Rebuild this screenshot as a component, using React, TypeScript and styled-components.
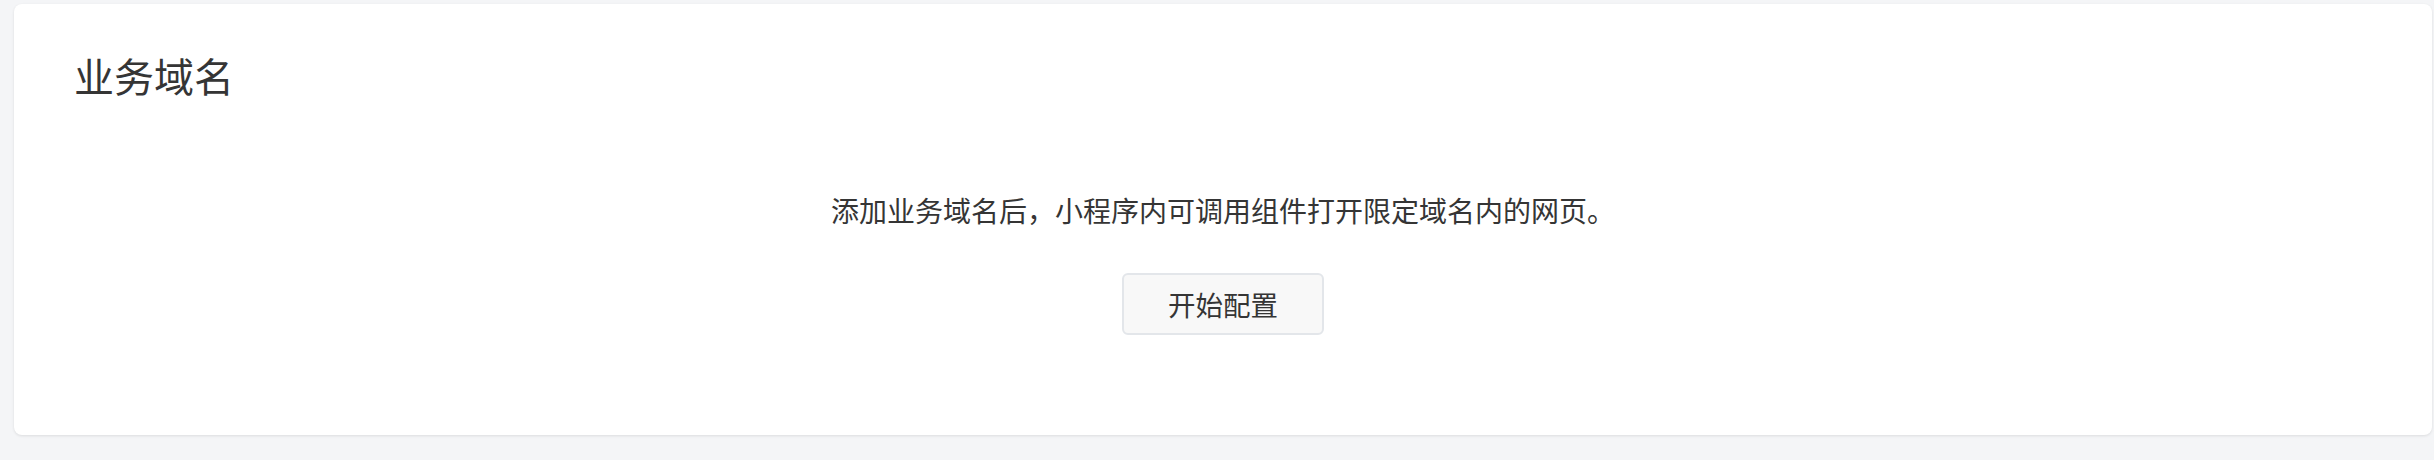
import React from 'react';
import styled, { createGlobalStyle } from 'styled-components';

const GlobalStyle = createGlobalStyle`
  html, body {
    margin: 0;
    padding: 0;
    background: #f4f5f7;
    font-family: "Noto Sans CJK SC", "Noto Sans", sans-serif;
    color: #353535;
  }
`;

const Page = styled.div`
  padding: 4px 2px 25px 14px;
`;

const Card = styled.section`
  background: #fff;
  border-radius: 8px;
  box-shadow: 0 1px 3px rgba(0, 0, 0, 0.1);
  padding: 51px 60px 100px;
`;

const Title = styled.h2`
  margin: 0;
  font-size: 40px;
  font-weight: 400;
  line-height: 40px;
  color: #353535;
`;

const Empty = styled.div`
  display: flex;
  flex-direction: column;
  align-items: center;
  margin-top: 95px;
`;

const Tip = styled.p`
  margin: 0;
  font-size: 28px;
  line-height: 40px;
  color: #353535;
`;

const Button = styled.button`
  margin-top: 43px;
  width: 202px;
  height: 62px;
  border: 2px solid #e3e6ea;
  border-radius: 6px;
  background: #f8f8f8;
  font-family: inherit;
  font-size: 27.5px;
  color: #353535;
  cursor: pointer;
`;

const App = () => (
  <Page>
    <GlobalStyle />
    <Card>
      <Title>业务域名</Title>
      <Empty>
        <Tip>添加业务域名后，小程序内可调用组件打开限定域名内的网页。</Tip>
        <Button>开始配置</Button>
      </Empty>
    </Card>
  </Page>
);

export default App;
